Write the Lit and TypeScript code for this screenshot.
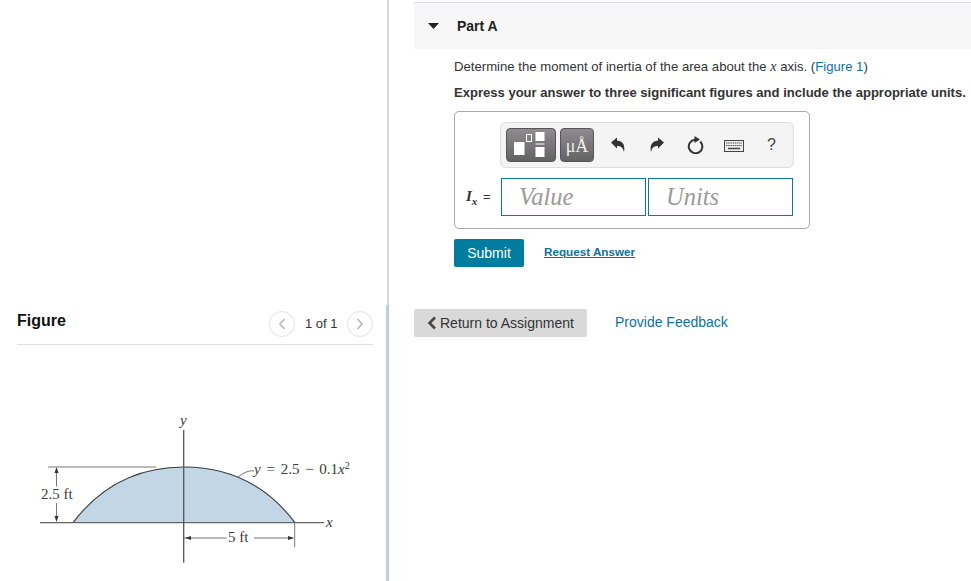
import { LitElement, css, html, svg } from "lit";
import { customElement } from "lit/decorators.js";

const figure = svg`
  <svg class="fig" width="380" height="181" viewBox="0 0 380 181">
    <g transform="translate(0 -400)">
      <path d="M73 521.700C106 478 146 466 184 466C222 466 262 478 295 521.700Z" fill="#c3d6e6"/>
      <path d="M73 521.700C106 478 146 466 184 466C222 466 262 478 295 521.700" fill="none" stroke="#3a3a3a" stroke-width="1.100"/>
    </g>
    <g stroke="#777" fill="none" stroke-width="1">
      <path d="M48 66H156"/>
      <path d="M40 121.700H324" stroke="#666" stroke-width="1.200"/>
      <path d="M183.700 29V161.700" stroke="#555" stroke-width="1.300"/>
      <path d="M56.500 68V85.500M56.500 102V120"/>
      <path d="M184 137H226.500M254 137H293M294.700 122V146"/>
      <path d="M238 76C243 72 249 69 254 70"/>
    </g>
    <g fill="#333">
      <path d="M56.500 66l-2 6h4zM56.500 121l-2-6h4zM185 137l6-2v4zM294 137l-6-2v4z"/>
    </g>
    <g class="figtext">
      <text x="41" y="98">2.5 ft</text>
      <text x="228" y="141">5 ft</text>
      <text x="180" y="24" font-style="italic">y</text>
      <text x="326" y="126" font-style="italic">x</text>
      <text x="254" y="73" word-spacing="2"><tspan font-style="italic">y</tspan> = 2.5 − 0.1<tspan font-style="italic">x</tspan><tspan font-size="10" dy="-5">2</tspan></text>
    </g>
  </svg>
`;

@customElement("app-root")
export class AppRoot extends LitElement {
  static styles = css`
    :host {
      display: block;
      width: 971px;
      height: 581px;
      overflow: hidden;
      background: #fff;
      font-family: "Liberation Sans", Arial, sans-serif;
      font-size: 14px;
      color: #333;
    }
    .page {
      display: flex;
      height: 581px;
    }
    .left {
      box-sizing: border-box;
      width: 386px;
      padding: 311px 13px 0 17px;
    }
    .divider {
      width: 3px;
      flex: none;
      background:
        linear-gradient(#c0cfe0, #c0cfe0) 0 305px / 3px 276px no-repeat,
        linear-gradient(#d3d8de, #d3d8de) 1px 0 / 2px 305px no-repeat;
    }
    .fig-head {
      display: flex;
      align-items: center;
      height: 33px;
      border-bottom: 1px solid #dcdfe3;
    }
    .fig-head h2 {
      margin: 0;
      flex: 1;
      font-size: 16px;
      line-height: 18px;
      font-weight: bold;
      color: #111;
      position: relative;
      top: -7px;
    }
    .pager {
      display: flex;
      align-items: center;
      gap: 9px;
      font-size: 13px;
      color: #333;
      position: relative;
      top: -4px;
    }
    .count {
      box-sizing: border-box;
      width: 34px;
      padding-left: 1px;
      white-space: nowrap;
    }
    .round {
      box-sizing: border-box;
      width: 26px;
      height: 26px;
      border: 1px solid #e3e3e3;
      border-radius: 50%;
      display: flex;
      align-items: center;
      justify-content: center;
    }
    .fig-wrap {
      margin: 56px 0 0 -17px;
    }
    .fig {
      display: block;
    }
    .figtext {
      font-family: "Liberation Serif", serif;
      font-size: 15px;
      fill: #3a3a3a;
    }
    .right {
      flex: 1;
      padding: 2px 0 0 25px;
      min-width: 0;
    }
    .part {
      display: flex;
      align-items: center;
      height: 46px;
      background: #f7f7f7;
      border-top: 1px solid #dcdfe3;
      font-weight: bold;
      font-size: 14px;
      color: #222;
    }
    .part svg {
      margin: 0 18px 0 14px;
    }
    .body {
      padding: 0 0 0 40px;
    }
    .q {
      margin: 9px 0 0;
      line-height: 18px;
      font-size: 13.150px;
      white-space: nowrap;
    }
    .q a,
    .feedback {
      color: #0d729c;
      text-decoration: none;
    }
    .q em {
      font-family: "Liberation Serif", serif;
      font-size: 14px;
    }
    .hint {
      margin: 8px 0 0;
      line-height: 18px;
      font-size: 13.050px;
      font-weight: bold;
      white-space: nowrap;
    }
    .answer {
      box-sizing: border-box;
      width: 356px;
      height: 118px;
      margin-top: 9px;
      border: 1px solid #aaa;
      border-radius: 5px;
      padding: 10px 15px 0 45px;
    }
    .tools {
      box-sizing: border-box;
      display: flex;
      align-items: center;
      height: 46px;
      border: 1px solid #dedede;
      border-radius: 6px;
      background: #f4f4f4;
      padding: 0 5px;
    }
    .tbtn {
      box-sizing: border-box;
      height: 34px;
      border: 1px solid #555;
      border-radius: 4px;
      background: linear-gradient(#8e8c90, #636265);
      display: flex;
      align-items: center;
      justify-content: center;
      flex: none;
    }
    .tbtn.tpl {
      width: 50px;
      margin-right: 4px;
    }
    .tbtn.units {
      width: 34px;
      color: #f0f0f0;
      font-family: "Liberation Serif", serif;
      font-size: 18px;
      padding-top: 2px;
    }
    .ico {
      display: flex;
      justify-content: center;
      align-items: center;
      width: 39px;
      flex: none;
    }
    .ico.first {
      margin-left: 4px;
    }
    .ico.keys {
      width: 37px;
      padding-top: 2px;
    }
    .help {
      font-size: 16px;
      color: #444;
    }
    .inputs {
      display: flex;
      align-items: center;
      gap: 2px;
      margin-top: 10px;
      margin-left: -34px;
    }
    .label {
      width: 33px;
      flex: none;
      font-size: 13px;
      word-spacing: 2px;
      white-space: nowrap;
      color: #333;
      position: relative;
      top: -1px;
    }
    .label i {
      font-family: "Liberation Serif", serif;
      font-size: 15px;
      font-weight: bold;
    }
    .label sub {
      font-family: "Liberation Serif", serif;
      font-style: italic;
      font-weight: bold;
      font-size: 11px;
      line-height: 0;
    }
    .field {
      box-sizing: border-box;
      width: 145px;
      height: 38px;
      border: 1px solid #0d7a9c;
      display: flex;
      align-items: center;
      padding-left: 17px;
      font-family: "Liberation Serif", serif;
      font-style: italic;
      font-size: 24.500px;
      color: #9a9a9a;
    }
    .actions {
      display: flex;
      align-items: flex-start;
      gap: 20px;
      margin-top: 10px;
    }
    .submit {
      box-sizing: border-box;
      width: 70px;
      height: 28px;
      background: #007c9e;
      border-radius: 2px;
      color: #fff;
      display: flex;
      align-items: center;
      justify-content: center;
      font-size: 14px;
    }
    .request {
      font-size: 11.700px;
      font-weight: bold;
      line-height: 16px;
      margin-top: 5px;
      color: #0d729c;
      text-decoration: underline;
    }
    .bottom {
      display: flex;
      align-items: center;
      gap: 28px;
      margin-top: 42px;
    }
    .back {
      box-sizing: border-box;
      width: 173px;
      height: 28px;
      display: flex;
      align-items: center;
      gap: 3px;
      padding-left: 13px;
      background: #d9d9d9;
      border-radius: 2px;
      color: #333;
      font-size: 14px;
      white-space: nowrap;
    }
    .feedback {
      margin-bottom: 2px;
    }
  `;

  render() {
    return html`
      <div class="page">
        <section class="left">
          <div class="fig-head">
            <h2>Figure</h2>
            <div class="pager">
              <span class="round">
                <svg width="10" height="14" viewBox="0 0 10 14"><path d="M7.500 2L3 7l4.500 5" fill="none" stroke="#bbb" stroke-width="1.800"/></svg>
              </span>
              <span class="count">1 of 1</span>
              <span class="round">
                <svg width="10" height="14" viewBox="0 0 10 14"><path d="M2.500 2L7 7l-4.500 5" fill="none" stroke="#bbb" stroke-width="1.800"/></svg>
              </span>
            </div>
          </div>
          <div class="fig-wrap">${figure}</div>
        </section>
        <div class="divider"></div>
        <section class="right">
          <div class="part">
            <svg width="11" height="6" viewBox="0 0 11 6"><path d="M0 0h11L5.500 6z" fill="#222"/></svg>
            Part A
          </div>
          <div class="body">
            <p class="q">Determine the moment of inertia of the area about the <em>x</em> axis. (<a href="#">Figure 1</a>)</p>
            <p class="hint">Express your answer to three significant figures and include the appropriate units.</p>
            <div class="answer">
              <div class="tools">
                <div class="tbtn tpl">
                  <svg width="48" height="32" viewBox="0 0 48 32">
                    <rect x="7" y="13" width="10.500" height="13" fill="#fff"/>
                    <rect x="19.500" y="5.500" width="5" height="7" fill="none" stroke="#fff"/>
                    <rect x="28.500" y="3" width="9" height="9" fill="#fff"/>
                    <rect x="28.500" y="14.500" width="9" height="1" fill="#fff"/>
                    <rect x="28.500" y="18" width="9" height="10" fill="#fff"/>
                  </svg>
                </div>
                <div class="tbtn units">μÅ</div>
                <span class="ico first">
                  <svg width="14" height="16" viewBox="0 0 14 16"><path d="M0 5.500L6 .5v3.300c5 0 8.500 3.500 7 11.200-1-4.500-3-6-7-6v2.500z" fill="#333"/></svg>
                </span>
                <span class="ico">
                  <svg width="14" height="16" viewBox="0 0 14 16"><path d="M14 5.500L8 .5v3.300c-5 0-8.500 3.500-7 11.200 1-4.500 3-6 7-6v2.500z" fill="#333"/></svg>
                </span>
                <span class="ico">
                  <svg width="17" height="18" viewBox="0 0 17 18"><path d="M13.200 5.500A6.800 6.800 0 1 1 8 3.700" fill="none" stroke="#333" stroke-width="2"/><path d="M7.500 0L13 3.500 7.500 7z" fill="#333"/></svg>
                </span>
                <span class="ico keys">
                  <svg width="20" height="14" viewBox="0 0 20 14">
                    <rect x=".5" y="1.500" width="19" height="11" fill="#eee" stroke="#444"/>
                    <path d="M2 4h16M2 6.500h16" stroke="#555" stroke-dasharray="1.500 .7"/>
                    <path d="M4 9.500h12" stroke="#444" stroke-width="1.500"/>
                  </svg>
                </span>
                <span class="ico help">?</span>
              </div>
              <div class="inputs">
                <span class="label"><i>I</i><sub>x</sub> =</span>
                <span class="field">Value</span>
                <span class="field">Units</span>
              </div>
            </div>
            <div class="actions">
              <span class="submit">Submit</span>
              <a class="request">Request Answer</a>
            </div>
          </div>
          <div class="bottom">
            <span class="back">
              <svg width="10" height="14" viewBox="0 0 10 14"><path d="M8 1.500L2.500 7 8 12.500" fill="none" stroke="#444" stroke-width="2.500"/></svg>
              Return to Assignment
            </span>
            <a class="feedback">Provide Feedback</a>
          </div>
        </section>
      </div>
    `;
  }
}
